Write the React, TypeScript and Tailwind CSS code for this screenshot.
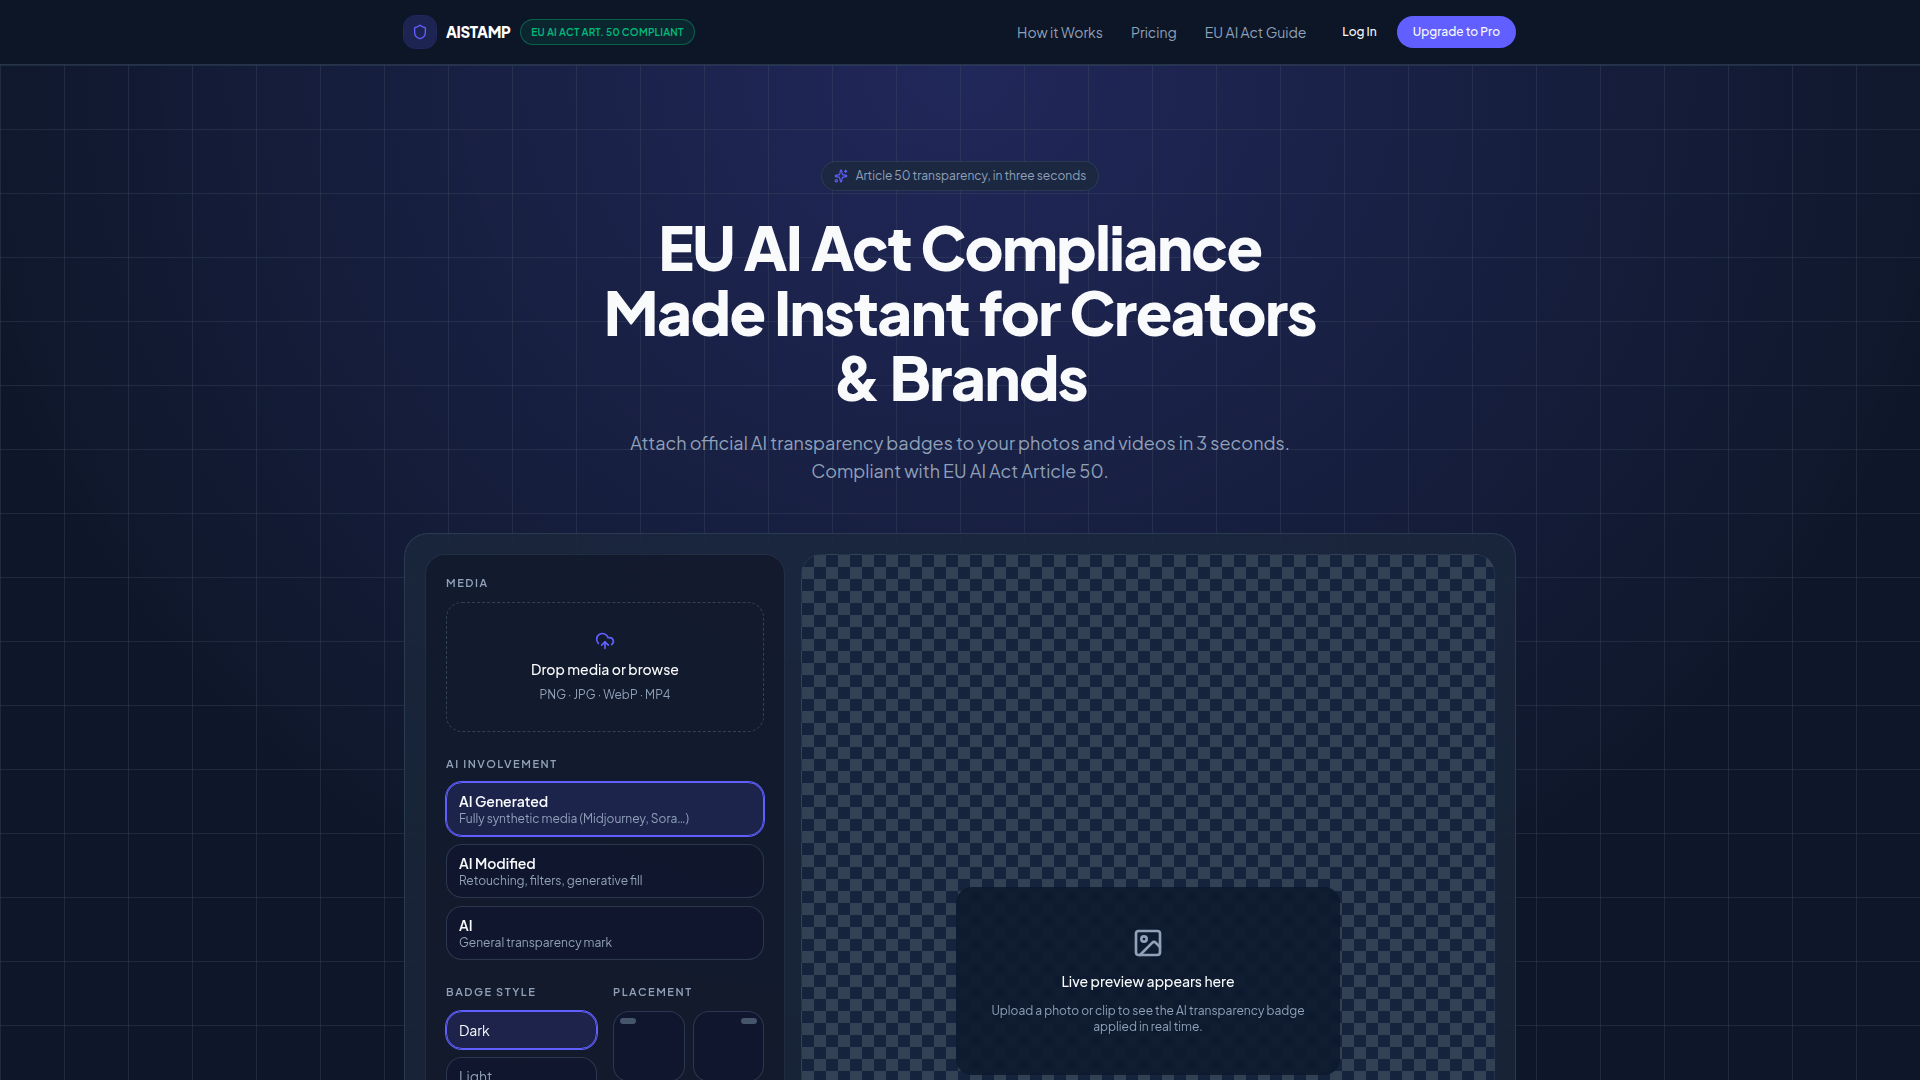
import { useState } from 'react';
import type { ReactNode } from 'react';
import { CloudUpload, Image as ImageIcon, Shield, Sparkles } from 'lucide-react';
import clsx from 'clsx';

const NAV_LINKS = ['How it Works', 'Pricing', 'EU AI Act Guide'];

const INVOLVEMENT = [
  { id: 'generated', title: 'AI Generated', hint: 'Fully synthetic media (Midjourney, Sora…)' },
  { id: 'modified', title: 'AI Modified', hint: 'Retouching, filters, generative fill' },
  { id: 'general', title: 'AI', hint: 'General transparency mark' },
];

const BADGE_STYLES = ['Dark', 'Light'];

const PLACEMENTS = [
  { id: 'Top left', className: 'justify-start' },
  { id: 'Top right', className: 'justify-end' },
];

const SELECTED = 'border-[#615fff] bg-[#615fff]/15 ring-1 ring-[#615fff]';
const IDLE = 'border-slate-700/80 bg-[#11162f]/60';

function Header() {
  return (
    <header className="border-b border-slate-700/70 bg-[#0d1627]">
      <div className="mx-auto flex h-16 max-w-6xl items-center justify-between px-5">
        <div className="flex items-center gap-2.5">
          <a href="#" className="flex items-center gap-2.5">
            <span className="flex size-8 items-center justify-center rounded-xl bg-[#615fff]/20 ring-1 ring-[#615fff]/25">
              <Shield className="size-4 text-[#615fff]" />
            </span>
            <span className="text-[15px] font-extrabold tracking-tight text-white">AISTAMP</span>
          </a>
          <span className="rounded-full border border-emerald-500/40 bg-emerald-500/10 px-2.5 py-1 text-[10px] font-semibold uppercase leading-4 tracking-wide text-emerald-500">
            EU AI Act Art. 50 Compliant
          </span>
        </div>
        <div className="flex items-center gap-6">
          <nav className="flex items-center gap-7 text-sm text-slate-400">
            {NAV_LINKS.map((label) => (
              <a key={label} href="#">
                {label}
              </a>
            ))}
          </nav>
          <div className="flex items-center gap-2">
            <button className="h-8 rounded-full px-3 text-xs font-medium text-slate-50">Log In</button>
            <button className="h-8 rounded-full bg-[#615fff] px-4 text-xs font-medium text-slate-50">
              Upgrade to Pro
            </button>
          </div>
        </div>
      </div>
    </header>
  );
}

function SectionLabel({ children }: { children: ReactNode }) {
  return (
    <h2 className="text-[11px] font-semibold uppercase leading-normal tracking-[0.14em] text-slate-400">{children}</h2>
  );
}

function Controls() {
  const [involvement, setInvolvement] = useState('generated');
  const [badgeStyle, setBadgeStyle] = useState('Dark');
  const [placement, setPlacement] = useState('');

  return (
    <aside className="flex flex-col gap-6 rounded-[20px] border border-slate-700/50 bg-[#0f172a]/70 p-5">
      <section className="flex flex-col gap-2.5">
        <SectionLabel>Media</SectionLabel>
        <button className="flex flex-col items-center gap-2 rounded-2xl border border-dashed border-slate-700 px-4 py-7">
          <CloudUpload className="size-5 text-[#615fff]" />
          <span className="text-sm font-medium text-slate-50">Drop media or browse</span>
          <span className="text-xs text-slate-400">PNG · JPG · WebP · MP4</span>
        </button>
      </section>

      <section className="flex flex-col gap-2.5">
        <SectionLabel>AI Involvement</SectionLabel>
        <div className="flex flex-col gap-2">
          {INVOLVEMENT.map(({ id, title, hint }) => (
            <button
              key={id}
              onClick={() => setInvolvement(id)}
              className={clsx('rounded-2xl border px-3 py-2 text-left', involvement === id ? SELECTED : IDLE)}
            >
              <span className="block text-sm font-semibold text-slate-50">{title}</span>
              <span className="block text-xs text-slate-400">{hint}</span>
            </button>
          ))}
        </div>
      </section>

      <div className="grid grid-cols-2 gap-4">
        <section className="flex flex-col gap-2.5">
          <SectionLabel>Badge style</SectionLabel>
          <div className="flex flex-col gap-2">
            {BADGE_STYLES.map((name) => (
              <button
                key={name}
                onClick={() => setBadgeStyle(name)}
                className={clsx(
                  'rounded-2xl border px-3 py-2 text-left text-sm',
                  badgeStyle === name ? [SELECTED, 'text-slate-50'] : [IDLE, 'text-slate-400'],
                )}
              >
                {name}
              </button>
            ))}
          </div>
        </section>
        <section className="flex flex-col gap-2.5">
          <SectionLabel>Placement</SectionLabel>
          <div className="grid grid-cols-2 gap-2">
            {PLACEMENTS.map(({ id, className }) => (
              <button
                key={id}
                aria-label={id}
                onClick={() => setPlacement(id)}
                className={clsx(
                  'flex aspect-square items-start rounded-2xl border p-1.5',
                  className,
                  placement === id ? SELECTED : IDLE,
                )}
              >
                <span className="h-1.5 w-4 rounded-full bg-slate-600" />
              </button>
            ))}
          </div>
        </section>
      </div>
    </aside>
  );
}

function Preview() {
  return (
    <div className="flex min-h-[853px] items-center justify-center rounded-[20px] border border-slate-700/50 bg-[#16233c] bg-[repeating-conic-gradient(#334155_0_25%,transparent_0_50%)] bg-size-[24px_24px] p-6">
      <div className="flex w-full max-w-sm flex-col items-center gap-3 rounded-2xl bg-[#0c172b]/85 px-8 py-10 text-center backdrop-blur-[2px]">
        <ImageIcon className="size-8 text-slate-400" />
        <p className="text-sm font-medium text-slate-50">Live preview appears here</p>
        <p className="text-xs text-slate-400">
          Upload a photo or clip to see the AI transparency badge applied in real time.
        </p>
      </div>
    </div>
  );
}

export default function App() {
  return (
    <div className="min-h-screen bg-[#0e1729] font-['Plus_Jakarta_Sans',Inter,sans-serif] text-slate-50 antialiased">
      <Header />
      <main className="bg-[linear-gradient(to_right,rgb(71_85_105/0.3)_1px,transparent_1px),linear-gradient(to_bottom,rgb(71_85_105/0.3)_1px,transparent_1px),radial-gradient(ellipse_1040px_960px_at_50%_0%,rgb(97_95_255/0.23),transparent)] bg-size-[64px_64px,64px_64px,100%_100%]">
        <div className="mx-auto max-w-6xl px-5 py-24">
          <div className="mx-auto flex max-w-3xl flex-col items-center text-center">
            <p className="flex items-center gap-2 rounded-full border border-slate-700/70 bg-[#1c2842] px-3 py-1.5 text-xs text-slate-400">
              <Sparkles className="size-3.5 text-[#615fff]" />
              Article 50 transparency, in three seconds
            </p>
            <h1 className="mt-6 text-6xl font-extrabold leading-[1.08] tracking-tight">
              EU AI Act Compliance Made Instant for Creators &amp; Brands
            </h1>
            <p className="mt-5 max-w-2xl text-lg leading-7 text-slate-400">
              Attach official AI transparency badges to your photos and videos in 3 seconds. Compliant with EU AI Act
              Article 50.
            </p>
          </div>

          <div className="mt-12 grid grid-cols-1 gap-4 rounded-3xl border border-slate-700/80 bg-slate-800/70 p-5 backdrop-blur-xl lg:grid-cols-[360px_1fr]">
            <Controls />
            <Preview />
          </div>
        </div>
      </main>
    </div>
  );
}
